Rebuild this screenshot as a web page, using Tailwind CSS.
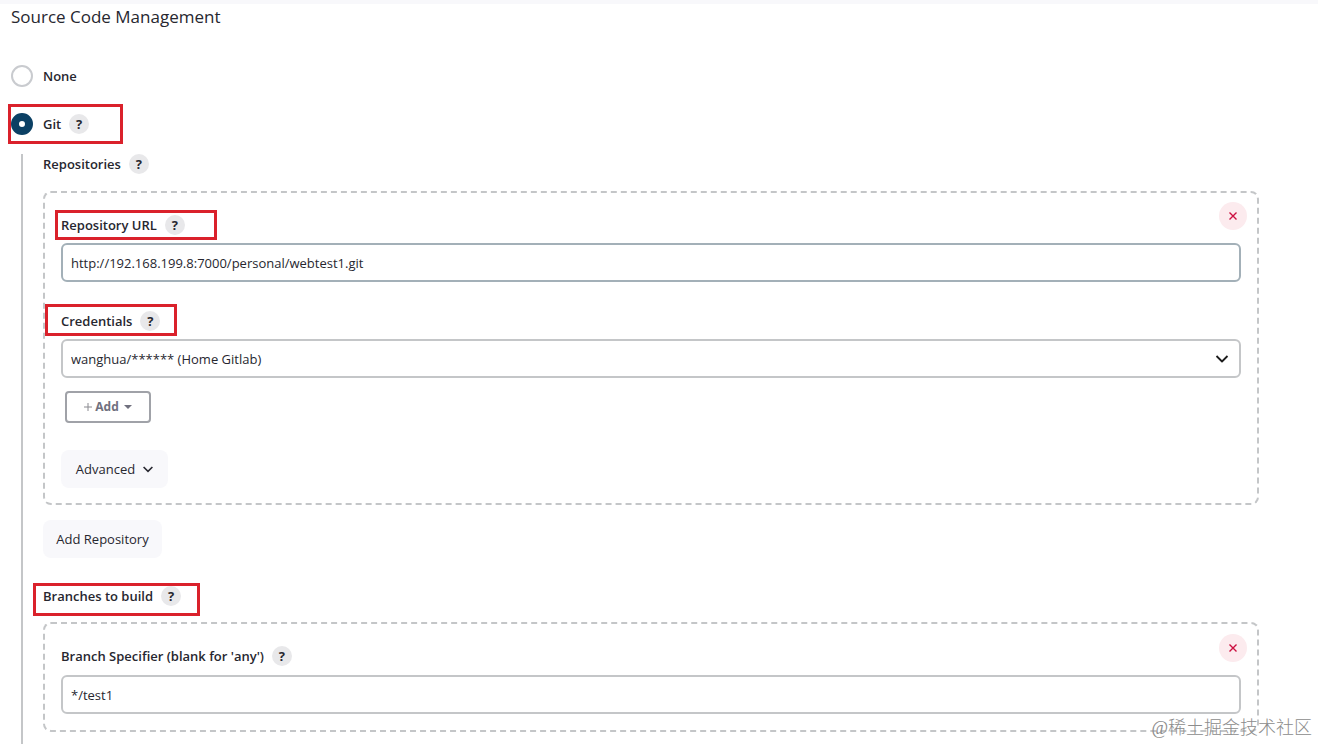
<!DOCTYPE html>
<html lang="en">
<head>
    <meta charset="UTF-8">
    <meta name="viewport" content="width=device-width, initial-scale=1.0">
    <title>Source Code Management</title>
    <script src="https://cdn.jsdelivr.net/npm/@tailwindcss/browser@4"></script>
</head>
<body class="relative flex min-h-screen flex-col bg-white font-['Open_Sans','Noto_Sans',sans-serif] text-[13px] leading-5 font-medium text-[#27272f]">
    <div class="h-1 bg-[#f8f8fb]"></div>

    <main class="flex flex-1 flex-col pl-[11px]">
        <h2 class="mt-px text-[17px] leading-6">Source Code Management</h2>

        <div class="mt-9 flex items-center gap-[10px]">
            <input type="radio" id="scmNone" name="scm" class="size-[22px] appearance-none rounded-full border-2 border-[#c9cbcf] bg-white">
            <label for="scmNone" class="font-semibold">None</label>
        </div>

        <div class="relative mt-[26px] flex items-center gap-[10px]">
            <input type="radio" id="scmGit" name="scm" checked class="size-[22px] appearance-none rounded-full bg-white checked:border-8 checked:border-[#0b4064]">
            <label for="scmGit" class="font-semibold">Git</label>
            <button type="button" aria-label="Help for Git" class="-ml-[2px] size-5 rounded-full bg-[#e8e8ea] font-bold">?</button>
            <div class="pointer-events-none absolute -top-[9px] -left-[3px] h-10 w-[115px] border-3 border-[#da212b]"></div>
        </div>

        <section class="mt-[19px] ml-[10px] flex-1 border-l-2 border-[#c4c6c8] pr-[59px] pl-5">
            <div class="flex items-center gap-2">
                <h3 class="font-semibold">Repositories</h3>
                <button type="button" aria-label="Help for Repositories" class="size-5 rounded-full bg-[#e8e8ea] font-bold">?</button>
            </div>

            <div class="relative mt-[17px] rounded-lg border-2 border-dashed border-[#c4c6c8] px-4 pt-[22px] pb-[15px]">
                <button type="button" aria-label="Delete repository" class="absolute top-[9px] right-[10px] flex size-7 items-center justify-center rounded-full bg-[#fcebee]">
                    <svg class="size-2" viewBox="0 0 8 8" fill="none" stroke="#cc1040" stroke-width="1.4"><path d="M.5.5l7 7M7.5.5l-7 7"/></svg>
                </button>

                <div class="relative flex items-center gap-2">
                    <label for="repoUrl" class="font-semibold">Repository URL</label>
                    <button type="button" aria-label="Help for Repository URL" class="size-5 rounded-full bg-[#e8e8ea] font-bold">?</button>
                    <div class="pointer-events-none absolute -top-[5px] -left-[6px] h-[30px] w-[162px] border-3 border-[#da212b]"></div>
                </div>
                <input type="text" id="repoUrl" value="http://192.168.199.8:7000/personal/webtest1.git" class="mt-2 block h-[39px] w-full rounded-md border-2 border-[#a3b0b8] px-2 font-normal">

                <div class="relative mt-[29px] flex items-center gap-2">
                    <label for="credentials" class="font-semibold">Credentials</label>
                    <button type="button" aria-label="Help for Credentials" class="size-5 rounded-full bg-[#e8e8ea] font-bold">?</button>
                    <div class="pointer-events-none absolute -top-[7px] -left-4 h-8 w-[132px] border-3 border-[#da212b]"></div>
                </div>
                <div class="relative mt-2">
                    <select id="credentials" class="block h-[39px] w-full appearance-none rounded-md border-2 border-[#c4c6c8] px-2 font-normal">
                        <option>wanghua/****** (Home Gitlab)</option>
                    </select>
                    <svg class="pointer-events-none absolute top-4 right-3 h-2 w-[14px]" viewBox="0 0 14 8" fill="none" stroke="#1c1c1c" stroke-width="1.8" stroke-linejoin="round"><path d="M1.500 1L7 6.500 12.500 1"/></svg>
                </div>

                <button type="button" class="mt-[13px] ml-1 flex h-8 w-[86px] items-center justify-center rounded border-2 border-[#a0a2a8] text-xs font-bold text-[#70707e]">
                    <svg class="mr-[3px] size-2" viewBox="0 0 8 8" fill="none" stroke="#8a8a90" stroke-width="1"><path d="M4 0v8M0 4h8"/></svg>
                    Add
                    <svg class="ml-[5px] h-1 w-2" viewBox="0 0 8 4" fill="#70707e"><path d="M0 0h8L4 4z"/></svg>
                </button>

                <button type="button" class="mt-[27px] flex h-[38px] w-[107px] items-center justify-center gap-2 rounded-lg bg-[#f8f8fb]">
                    Advanced
                    <svg class="h-[7px] w-[10px]" viewBox="0 0 10 7" fill="none" stroke="#27272f" stroke-width="1.600"><path d="M.6 1L5 5.400 9.400 1"/></svg>
                </button>
            </div>

            <button type="button" class="mt-[15px] h-[38px] w-[119px] rounded-lg bg-[#f8f8fb]">Add Repository</button>

            <div class="relative mt-7 flex items-center gap-2">
                <h3 class="font-semibold">Branches to build</h3>
                <button type="button" aria-label="Help for Branches to build" class="size-5 rounded-full bg-[#e8e8ea] font-bold">?</button>
                <div class="pointer-events-none absolute -top-[3px] -left-[10px] h-[33px] w-[167px] border-3 border-[#da212b]"></div>
            </div>

            <div class="relative mt-4 rounded-lg border-2 border-dashed border-[#c4c6c8] px-4 pt-[22px] pb-4">
                <button type="button" aria-label="Delete branch" class="absolute top-[10px] right-[10px] flex size-7 items-center justify-center rounded-full bg-[#fcebee]">
                    <svg class="size-2" viewBox="0 0 8 8" fill="none" stroke="#cc1040" stroke-width="1.4"><path d="M.5.5l7 7M7.5.5l-7 7"/></svg>
                </button>
                <div class="flex items-center gap-2">
                    <label for="branchSpec" class="font-semibold">Branch Specifier (blank for 'any')</label>
                    <button type="button" aria-label="Help for Branch Specifier" class="size-5 rounded-full bg-[#e8e8ea] font-bold">?</button>
                </div>
                <input type="text" id="branchSpec" value="*/test1" class="mt-[9px] block h-[39px] w-full rounded-md border-2 border-[#c4c6c8] px-2 font-normal">
            </div>
        </section>
    </main>

    <div class="absolute right-[6px] bottom-1 font-['Liberation_Serif','Noto_Sans_CJK_SC',sans-serif] text-lg leading-6 font-light text-[#8c8c8c]">@稀土掘金技术社区</div>
</body>
</html>
